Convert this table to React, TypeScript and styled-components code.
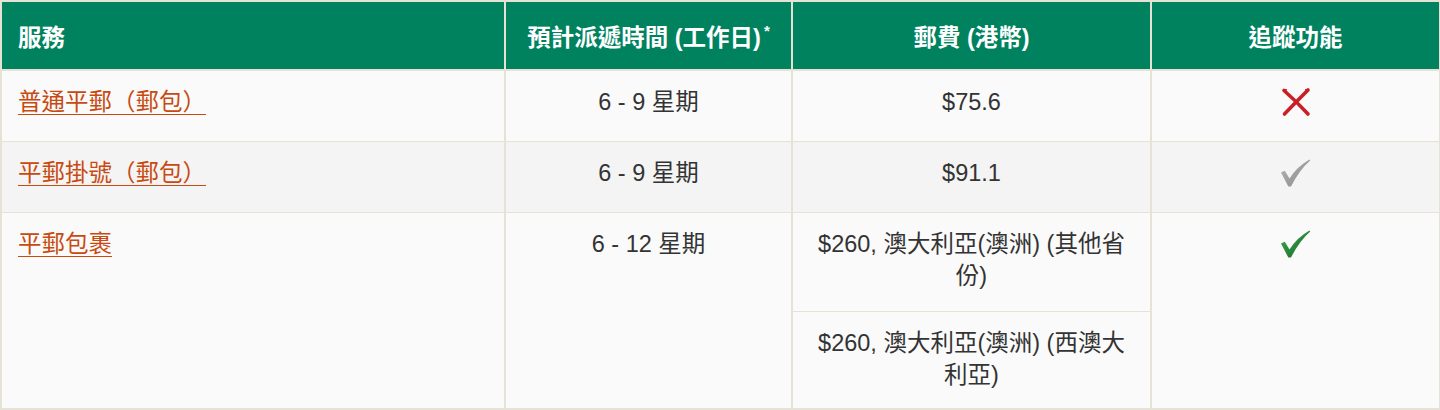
import React from "react";
import styled, { createGlobalStyle } from "styled-components";

const GlobalStyle = createGlobalStyle`
  html, body {
    margin: 0;
    padding: 0;
    background: #ffffff;
  }
  body {
    font-family: "Liberation Sans", "Noto Sans CJK TC", sans-serif;
    color: #333333;
  }
`;

const Table = styled.table`
  width: 1439px;
  table-layout: fixed;
  border-collapse: collapse;
  border: 2px solid #e6e3d6;
  font-size: 23.5px;
`;

const HeadCell = styled.th<{ align?: "left" | "center" }>`
  height: 67px;
  padding: 0 16px;
  background: #00825f;
  color: #ffffff;
  font-weight: bold;
  font-size: 23.5px;
  text-align: ${({ align }) => align || "center"};
  vertical-align: middle;
  border: 2px solid #e6e3d6;
`;

const Star = styled.sup`
  font-size: 15px;
  margin-left: 3px;
  vertical-align: 10px;
  line-height: 0;
`;

const Row = styled.tr<{ shade?: boolean }>`
  background: ${({ shade }) => (shade ? "#f4f4f4" : "#fafafa")};
`;

const Cell = styled.td<{ align?: "left" | "center"; h?: number }>`
  height: ${({ h }) => (h ? `${h}px` : "auto")};
  padding: 15px 16px 0;
  line-height: 32px;
  text-align: ${({ align }) => align || "center"};
  vertical-align: top;
  border: 2px solid #e6e3d6;
  border-top-width: 1px;
  border-bottom-width: 1px;
  box-sizing: border-box;
`;

const ServiceLink = styled.a`
  color: #c84a10;
  text-decoration: underline;
  text-underline-offset: 4px;
  text-decoration-thickness: 1px;
  cursor: pointer;
`;

const Mark = styled.span`
  display: inline-flex;
  align-items: center;
  justify-content: center;
  height: 32px;
`;

function CrossIcon() {
  return (
    <svg width="30" height="30" viewBox="0 0 30 30">
      <path
        d="M3 3.5 Q15 14 27 27 M27 3 Q15 15 3.5 27"
        stroke="#c91f27"
        strokeWidth="3.6"
        strokeLinecap="round"
        fill="none"
      />
      <path d="M2 2 L6 2 L5 6 Z M28 2 L24 2 L25 6 Z" fill="#c91f27" />
    </svg>
  );
}

function CheckIcon({ color, dark }: { color: string; dark: string }) {
  const id = `g${color.replace("#", "")}`;
  return (
    <svg width="32" height="30" viewBox="0 0 32 30">
      <defs>
        <linearGradient id={id} x1="0" y1="0" x2="1" y2="1">
          <stop offset="0" stopColor={color} />
          <stop offset="1" stopColor={dark} />
        </linearGradient>
      </defs>
      <path
        d="M1 14.5 L4.8 12.8 L9.5 20.5 Q17 8.5 29.5 1.5 L30.2 2.6 Q19.5 12 11 28.5 L8.3 28.5 Z"
        fill={`url(#${id})`}
      />
    </svg>
  );
}

export default function App() {
  return (
    <>
      <GlobalStyle />
      <Table>
        <colgroup>
          <col style={{ width: 504 }} />
          <col style={{ width: 287 }} />
          <col style={{ width: 359 }} />
          <col style={{ width: 289 }} />
        </colgroup>
        <thead>
          <tr>
            <HeadCell align="left">服務</HeadCell>
            <HeadCell>
              預計派遞時間 (工作日)<Star>*</Star>
            </HeadCell>
            <HeadCell>郵費 (港幣)</HeadCell>
            <HeadCell>追蹤功能</HeadCell>
          </tr>
        </thead>
        <tbody>
          <Row>
            <Cell align="left" h={71}>
              <ServiceLink>普通平郵（郵包）</ServiceLink>
            </Cell>
            <Cell>6 - 9 星期</Cell>
            <Cell>$75.6</Cell>
            <Cell>
              <Mark>
                <CrossIcon />
              </Mark>
            </Cell>
          </Row>
          <Row shade>
            <Cell align="left" h={71}>
              <ServiceLink>平郵掛號（郵包）</ServiceLink>
            </Cell>
            <Cell>6 - 9 星期</Cell>
            <Cell>$91.1</Cell>
            <Cell>
              <Mark>
                <CheckIcon color="#b5b5b5" dark="#8a8a8a" />
              </Mark>
            </Cell>
          </Row>
          <Row>
            <Cell align="left" rowSpan={2}>
              <ServiceLink>平郵包裹</ServiceLink>
            </Cell>
            <Cell rowSpan={2}>6 - 12 星期</Cell>
            <Cell h={99}>$260, 澳大利亞(澳洲) (其他省份)</Cell>
            <Cell rowSpan={2}>
              <Mark>
                <CheckIcon color="#3fa84a" dark="#17692b" />
              </Mark>
            </Cell>
          </Row>
          <Row>
            <Cell h={98}>$260, 澳大利亞(澳洲) (西澳大利亞)</Cell>
          </Row>
        </tbody>
      </Table>
    </>
  );
}
